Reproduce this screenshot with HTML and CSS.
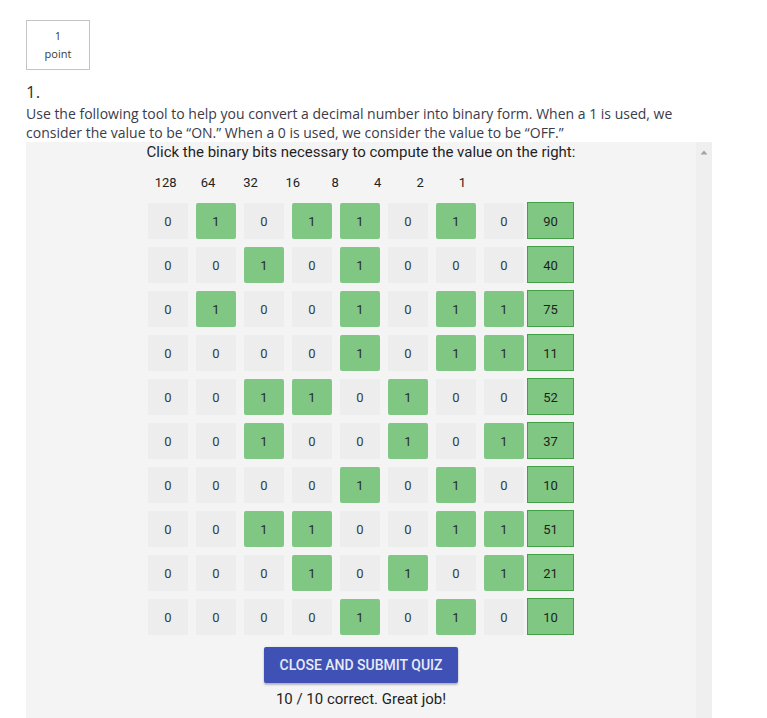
FILE: index.html
```html
<!DOCTYPE html>
<html>
<head>
<meta charset="utf-8">
<link rel="stylesheet" href="styles.css">
</head>
<body>
<div class="page">
  <div class="points"><span>1</span><span>point</span></div>
  <div class="qnum">1.</div>
  <p class="prompt">Use the following tool to help you convert a decimal number into binary form. When a 1 is used, we consider the value to be “ON.” When a 0 is used, we consider the value to be “OFF.”</p>
  <div class="panel">
    <div class="tool">
      <div class="title">Click the binary bits necessary to compute the value on the right:</div>
      <div class="labels">
        <span>128</span><span>64</span><span>32</span><span>16</span><span>8</span><span>4</span><span>2</span><span>1</span>
      </div>
      <div class="rows">
        <div class="row"><span class="bit">0</span><span class="bit on">1</span><span class="bit">0</span><span class="bit on">1</span><span class="bit on">1</span><span class="bit">0</span><span class="bit on">1</span><span class="bit">0</span><span class="val">90</span></div>
        <div class="row"><span class="bit">0</span><span class="bit">0</span><span class="bit on">1</span><span class="bit">0</span><span class="bit on">1</span><span class="bit">0</span><span class="bit">0</span><span class="bit">0</span><span class="val">40</span></div>
        <div class="row"><span class="bit">0</span><span class="bit on">1</span><span class="bit">0</span><span class="bit">0</span><span class="bit on">1</span><span class="bit">0</span><span class="bit on">1</span><span class="bit on">1</span><span class="val">75</span></div>
        <div class="row"><span class="bit">0</span><span class="bit">0</span><span class="bit">0</span><span class="bit">0</span><span class="bit on">1</span><span class="bit">0</span><span class="bit on">1</span><span class="bit on">1</span><span class="val">11</span></div>
        <div class="row"><span class="bit">0</span><span class="bit">0</span><span class="bit on">1</span><span class="bit on">1</span><span class="bit">0</span><span class="bit on">1</span><span class="bit">0</span><span class="bit">0</span><span class="val">52</span></div>
        <div class="row"><span class="bit">0</span><span class="bit">0</span><span class="bit on">1</span><span class="bit">0</span><span class="bit">0</span><span class="bit on">1</span><span class="bit">0</span><span class="bit on">1</span><span class="val">37</span></div>
        <div class="row"><span class="bit">0</span><span class="bit">0</span><span class="bit">0</span><span class="bit">0</span><span class="bit on">1</span><span class="bit">0</span><span class="bit on">1</span><span class="bit">0</span><span class="val">10</span></div>
        <div class="row"><span class="bit">0</span><span class="bit">0</span><span class="bit on">1</span><span class="bit on">1</span><span class="bit">0</span><span class="bit">0</span><span class="bit on">1</span><span class="bit on">1</span><span class="val">51</span></div>
        <div class="row"><span class="bit">0</span><span class="bit">0</span><span class="bit">0</span><span class="bit on">1</span><span class="bit">0</span><span class="bit on">1</span><span class="bit">0</span><span class="bit on">1</span><span class="val">21</span></div>
        <div class="row"><span class="bit">0</span><span class="bit">0</span><span class="bit">0</span><span class="bit">0</span><span class="bit on">1</span><span class="bit">0</span><span class="bit on">1</span><span class="bit">0</span><span class="val">10</span></div>
      </div>
      <button class="submit">CLOSE AND SUBMIT QUIZ</button>
      <div class="result">10 / 10 correct. Great job!</div>
    </div>
    <div class="scrollbar"><svg width="16" height="16" viewBox="0 0 16 16"><path d="M4.5 10.5 L8 6.5 L11.5 10.5 Z" fill="#a3a3a3"/></svg></div>
  </div>
</div>
</body>
</html>
```
FILE: styles.css
```css
* { box-sizing: border-box; }
html, body { margin: 0; padding: 0; background: #ffffff; }
body { font-family: "Open Sans", "Liberation Sans", sans-serif; color: #373a3c; }
.page { padding: 20px 0 0 26px; width: 712px; }
.points {
  width: 64px; height: 50px;
  border: 1px solid #c4c4c4;
  display: flex; flex-direction: column; align-items: center; justify-content: center;
  font-size: 11px; line-height: 18px; color: #3a3a3a;
}
.qnum { margin-top: 10px; font-size: 17px; line-height: 24px; color: #333; }
.prompt { margin: 0; font-size: 14px; line-height: 19px; color: #3b3b4a; width: 670px; }
.panel { display: flex; background: #f4f4f4; height: 600px; }
.tool { width: 670px; display: flex; flex-direction: column; align-items: center; font-family: Roboto, "Liberation Sans", sans-serif; color: #222; }
.scrollbar { width: 16px; background: #efefef; padding-top: 2px; }
.scrollbar svg { display: block; }
.title { font-size: 15px; line-height: 20px; margin-top: 0; color: #1f1f1f; }
.labels { display: flex; margin-top: 12px; width: 426px; margin-left: -7px; }
.labels span { width: 42.4px; text-align: center; font-size: 13px; line-height: 18px; color: #222; }
.rows { display: flex; flex-direction: column; gap: 8px; margin-top: 11px; }
.row { display: flex; gap: 8px; align-items: center; height: 36px; }
.bit {
  width: 40px; height: 36px; border-radius: 2px; background: #ededed;
  display: flex; align-items: center; justify-content: center;
  font-size: 13px; color: #3a3a3a;
}
.bit.on { background: #81c784; color: #2b2b2b; }
.val {
  width: 47px; height: 37px; margin-left: -5px; margin-top: -1px;
  background: #81c784; border: 1px solid #43a047;
  display: flex; align-items: center; justify-content: center; padding-top: 2px;
  font-size: 13px; color: #1e1e1e;
}
.submit {
  margin-top: 12px; width: 194px; height: 36px; border: none; border-radius: 2px;
  background: #3f51b5; color: #e8eaf6;
  font-family: Roboto, "Liberation Sans", sans-serif; font-size: 14px; font-weight: 500;
  box-shadow: 0 2px 2px rgba(0,0,0,0.24), 0 0 2px rgba(0,0,0,0.12);
  padding: 0;
}
.result { margin-top: 6px; font-size: 15px; line-height: 20px; color: #1f1f1f; }
```
